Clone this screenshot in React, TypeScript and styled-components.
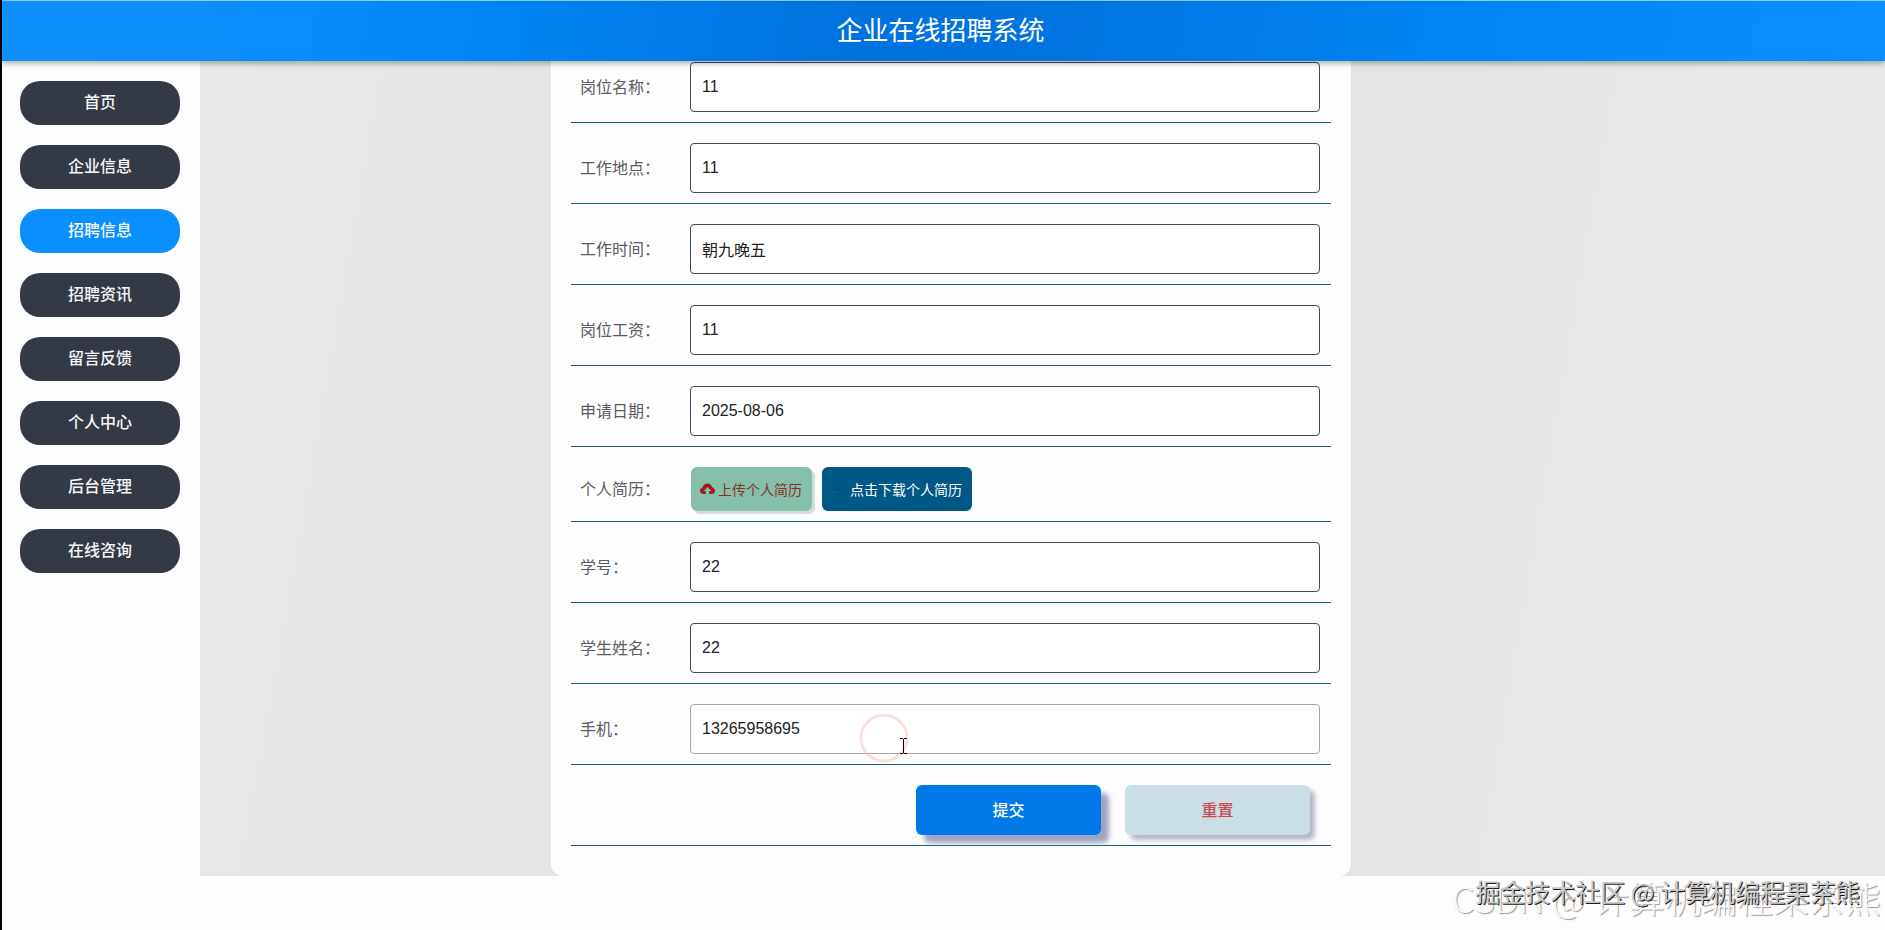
import React from 'react';
import styled, { createGlobalStyle, css } from 'styled-components';

const Global = createGlobalStyle`
  *, *::before, *::after { box-sizing: border-box; }
  body {
    margin: 0;
    background: #fdfdfd;
    font-family: "Liberation Sans", "Noto Sans CJK SC", sans-serif;
    color: #606266;
  }
  button, input { font: inherit; }
`;

const cjk = '"Noto Sans CJK SC", sans-serif';

const Page = styled.div`
  position: relative;
  display: flex;
  flex-direction: column;
  min-height: 100vh;
  border-left: 2px solid #000;
  overflow: hidden;
`;

const Header = styled.header`
  position: relative;
  z-index: 1;
  display: flex;
  align-items: center;
  justify-content: center;
  height: 61px;
  padding: 0 6px 4px 0;
  border-top: 1px solid #7fcdf0;
  background: linear-gradient(100deg, #1090ff 0%, #0a8dfc 16%, #0084f3 27%, #0072df 46%, #0073e0 54%, #0084f3 76%, #0c90ff 100%);
  box-shadow: 0 2px 6px rgba(0, 0, 0, 0.35);
`;

const Title = styled.h1`
  margin: 0;
  color: #fff;
  font: 400 26px/40px ${cjk};
`;

const Body = styled.div`
  display: flex;
  align-items: stretch;
`;

const Sidebar = styled.nav`
  display: flex;
  flex: 0 0 198px;
  flex-direction: column;
  gap: 20px;
  padding: 20px 20px 20px 18px;
`;

const NavLink = styled.a<{ $active?: boolean }>`
  height: 44px;
  border-radius: 20px;
  background: ${(p) => (p.$active ? '#0a8fff' : '#343a45')};
  color: #f4f6f8;
  font: 500 16px/40px ${cjk};
  text-align: center;
  text-decoration: none;
`;

const Main = styled.main`
  flex: 1;
  display: grid;
  grid-template-columns: 351fr minmax(0, 800px) 534fr;
  background: linear-gradient(100deg, #e8e8e8 0%, #e4e4e4 22%, #e4e4e4 70%, #e8e8e8 84%, #e8e8e8 100%);
`;

const Card = styled.form`
  grid-column: 2;
  padding: 0 20px 30px;
  border-radius: 0 0 12px 12px;
  background: #fdfdfd;
`;

const Row = styled.div<{ $end?: boolean }>`
  display: flex;
  align-items: center;
  justify-content: ${(p) => (p.$end ? 'flex-end' : 'flex-start')};
  gap: ${(p) => (p.$end ? '24px' : '0')};
  padding: 20px ${(p) => (p.$end ? '21px' : '11px')} 10px 9px;
  border-bottom: 1px solid #10656e;

  &:first-child { padding-top: 1px; }
`;

const labelText = css`
  flex: 0 0 110px;
  padding-bottom: 3px;
  color: #5a5c62;
  font: 400 16px/24px ${cjk};
`;
const Label = styled.label`${labelText}`;
const Caption = styled.span`${labelText}`;

const Field = styled.input<{ $soft?: boolean }>`
  flex: 1;
  min-width: 0;
  height: 50px;
  padding: 0 11px;
  border: 1px solid ${(p) => (p.$soft ? '#a6a6a6' : '#48484c')};
  border-radius: 4px;
  background: #fff;
  color: #222;
  font-size: 16px;
  outline: none;
`;

const FileActions = styled.div`
  display: flex;
  gap: 10px;
  padding-left: 1px;
`;

const FileButton = styled.button<{ $download?: boolean }>`
  display: flex;
  align-items: center;
  gap: ${(p) => (p.$download ? '5px' : '3px')};
  height: 44px;
  margin: 0;
  padding: 0 10px 1px 9px;
  border: 0;
  border-radius: 6px;
  background: ${(p) => (p.$download ? '#005887' : '#86c0aa')};
  color: ${(p) => (p.$download ? '#fff' : '#86302c')};
  box-shadow: ${(p) => (p.$download ? 'none' : '3px 3px 0 #cfe0dc')};
  font: 400 14px/20px ${cjk};
  white-space: nowrap;
`;

const Action = styled.button<{ $reset?: boolean }>`
  width: 185px;
  height: 50px;
  padding: 0 0 2px;
  border: 0;
  border-radius: 6px;
  background: ${(p) => (p.$reset ? '#cadfe5' : '#0079e8')};
  color: ${(p) => (p.$reset ? '#cf4650' : '#fff')};
  box-shadow: ${(p) => (p.$reset ? '5px 5px 5px #b4b8c4' : '8px 8px 5px #a0a4c2')};
  font: 500 16px/24px ${cjk};
`;

const Pointer = styled.svg`
  position: absolute;
  top: 710px;
  left: 855px;
  pointer-events: none;
`;

const Watermark = styled.p<{ $back?: boolean }>`
  position: absolute;
  right: ${(p) => (p.$back ? '4px' : '25px')};
  bottom: ${(p) => (p.$back ? '11px' : '21px')};
  margin: 0;
  color: ${(p) => (p.$back ? '#fbfbfb' : '#c8c8c8')};
  font: ${(p) => (p.$back ? '300 36px/44px' : '400 25px/36px')} ${cjk};
  text-shadow: ${(p) => (p.$back ? '1px 1px 1px #999' : '1px 1px 0 #1c1c1c')};
  white-space: nowrap;
  pointer-events: none;
`;

const navItems = ['首页', '企业信息', '招聘信息', '招聘资讯', '留言反馈', '个人中心', '后台管理', '在线咨询'];

type FieldData = { id: string; label: string; value: string; soft?: boolean };

const jobFields: FieldData[] = [
  { id: 'post', label: '岗位名称：', value: '11' },
  { id: 'place', label: '工作地点：', value: '11' },
  { id: 'hours', label: '工作时间：', value: '朝九晚五' },
  { id: 'salary', label: '岗位工资：', value: '11' },
  { id: 'date', label: '申请日期：', value: '2025-08-06' },
];

const studentFields: FieldData[] = [
  { id: 'number', label: '学号：', value: '22' },
  { id: 'name', label: '学生姓名：', value: '22' },
  { id: 'phone', label: '手机：', value: '13265958695', soft: true },
];

function FieldRow({ id, label, value, soft }: FieldData) {
  return (
    <Row>
      <Label htmlFor={id}>{label}</Label>
      <Field id={id} type="text" defaultValue={value} $soft={soft} />
    </Row>
  );
}

function UploadIcon() {
  return (
    <svg width="15" height="12" viewBox="0 0 15 12" fill="#9e1c20" aria-hidden="true">
      <path d="M7.500 0.500C10 0.500 11.800 2 12.200 4.200C13.900 4.600 15 6 15 7.700C15 9.700 13.500 11 11.600 11H9.200V8H11.200L7.500 4L3.800 8H5.800V11H3.400C1.500 11 0 9.700 0 7.700C0 6 1.100 4.600 2.800 4.200C3.200 2 5 0.500 7.500 0.500Z" />
    </svg>
  );
}

function DownloadIcon() {
  return (
    <svg width="14" height="14" viewBox="0 0 14 14" fill="none" stroke="#0b4166" aria-hidden="true">
      <path d="M7 4v5M5 7l2 2 2-2" />
      <path d="M4 1.500h2M9 1.500h2M4 12.500h6M2.500 5v4M11.500 5v4" strokeDasharray="2 2" />
    </svg>
  );
}

export default function App() {
  return (
    <>
      <Global />
      <Page>
        <Header>
          <Title>企业在线招聘系统</Title>
        </Header>
        <Body>
          <Sidebar>
            {navItems.map((item) => (
              <NavLink key={item} href="#" $active={item === '招聘信息'}>
                {item}
              </NavLink>
            ))}
          </Sidebar>
          <Main>
            <Card onSubmit={(e) => e.preventDefault()}>
              {jobFields.map((f) => (
                <FieldRow key={f.id} {...f} />
              ))}
              <Row>
                <Caption>个人简历：</Caption>
                <FileActions>
                  <FileButton type="button">
                    <UploadIcon />
                    上传个人简历
                  </FileButton>
                  <FileButton type="button" $download>
                    <DownloadIcon />
                    点击下载个人简历
                  </FileButton>
                </FileActions>
              </Row>
              {studentFields.map((f) => (
                <FieldRow key={f.id} {...f} />
              ))}
              <Row $end>
                <Action type="submit">提交</Action>
                <Action type="reset" $reset>
                  重置
                </Action>
              </Row>
            </Card>
          </Main>
        </Body>
        <Pointer width="56" height="56" viewBox="0 0 56 56" fill="none" aria-hidden="true">
          <circle cx="27" cy="28" r="23" stroke="#f3c4be" strokeOpacity="0.5" strokeWidth="3" />
          <path d="M43 28.500h3M47 28.500h3M46.500 29v14M43 43.500h3M47 43.500h3" stroke="#000" />
        </Pointer>
        <Watermark $back>CSDN @ 计算机编程果茶熊</Watermark>
        <Watermark>掘金技术社区 @ 计算机编程果茶熊</Watermark>
      </Page>
    </>
  );
}
